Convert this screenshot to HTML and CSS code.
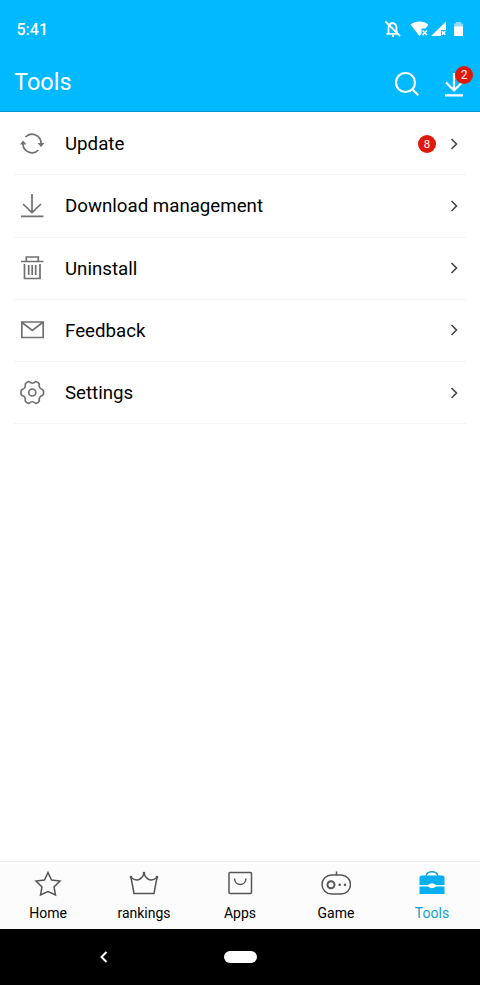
FILE: index.html
```html
<!DOCTYPE html>
<html lang="en">
<head>
<meta charset="utf-8">
<title>Tools</title>
<link rel="stylesheet" href="styles.css">
</head>
<body>
<div class="screen">
  <header class="header">
    <div class="status">
      <span class="time">5:41</span>
      <svg class="status-icons" width="82" height="22" viewBox="384 18 82 22">
        <path class="line" d="M388.500 33.500V28c0-3 1.500-4.500 4-5 2.500.5 4 2 4 5v5.500M386.500 33.800h12M392 36h2M385.500 21.500l14.500 14.500" stroke-width="1.800"/>
        <path class="fill" d="M410.500 24.500c5-4 13-4 18 0l-3 4h-4v5l-2 2.500z"/>
        <path class="line" d="M422.500 30.500l4.500 4.500m0-4.500l-4.500 4.500" stroke-width="1.600"/>
        <path class="fill" d="M431 36L446 21.500V30h-5v6z"/>
        <path class="line" d="M441.800 31.300l3.500 3.500m0-3.500l-3.500 3.500" stroke-width="1.500"/>
        <path class="pale" d="M454 23.500h2V22h5v1.500h2V27h-9z"/>
        <path class="fill" d="M454 26.500h9V36h-9z"/>
      </svg>
    </div>
    <div class="titlebar">
      <h1>Tools</h1>
      <svg class="search" width="26" height="26" viewBox="0 0 26 26"><circle cx="11.500" cy="11.500" r="9.500"/><path d="M18.300 18.300l6 6"/></svg>
      <div class="downloads">
        <svg width="22" height="26" viewBox="0 0 22 26"><path d="M11 2v17M3 11.500l8 8 8-8M2 24.300h18"/></svg>
        <span class="badge badge-top">2</span>
      </div>
    </div>
  </header>
  <main class="list">
    <div class="row">
      <svg class="icon" viewBox="0 0 26 26"><path d="M6.500 6A9 9 0 0 1 22 12.500M19.500 19A9 9 0 0 1 4 12.500"/><path class="head" d="M1 13.500l3-4 3.500 4zM18.500 12h7l-3.500 4z"/></svg>
      <span class="label">Update</span><span class="badge">8</span>
      <svg class="chevron" viewBox="0 0 8 14"><path d="M1.500 2l5 5-5 5"/></svg>
    </div>
    <div class="row">
      <svg class="icon" viewBox="0 0 26 26"><path d="M13 1v18M4 11l9 8.500 9-8.500M2 23.300h22.500"/></svg>
      <span class="label">Download management</span>
      <svg class="chevron" viewBox="0 0 8 14"><path d="M1.500 2l5 5-5 5"/></svg>
    </div>
    <div class="row">
      <svg class="icon" viewBox="0 0 26 26"><path d="M2 6.500h22.500M7.300 6V2h12v4M5.500 9v14.500h15.500V9M9.700 10v10M13.200 10v10M16.700 10v10"/></svg>
      <span class="label">Uninstall</span>
      <svg class="chevron" viewBox="0 0 8 14"><path d="M1.500 2l5 5-5 5"/></svg>
    </div>
    <div class="row">
      <svg class="icon" viewBox="0 0 26 26"><path d="M2.800 5h21.400v15.500h-21.400zM3 5.500l10.300 8 10.300-8"/></svg>
      <span class="label">Feedback</span>
      <svg class="chevron" viewBox="0 0 8 14"><path d="M1.500 2l5 5-5 5"/></svg>
    </div>
    <div class="row">
      <svg class="icon" viewBox="0 0 26 26"><path stroke-linejoin="round" d="M7.500 2.500l2.500-1Q13.300 5 16.600 1.500l2.500 1 1.200 1.500Q19.500 8.500 23.500 9.500l1 1.500v3l-1 1.500Q19.500 16.500 20.300 21l-1.200 1.500-2.500 1Q13.300 20 10 23.500l-2.500-1L6.300 21Q7 16.500 3 15.500L2 14v-3l1-1.500Q7 8.500 6.300 4z"/><circle cx="13.300" cy="12.500" r="3.500"/></svg>
      <span class="label">Settings</span>
      <svg class="chevron" viewBox="0 0 8 14"><path d="M1.500 2l5 5-5 5"/></svg>
    </div>
  </main>
  <nav class="tabs">
    <div class="tab"><svg viewBox="0 0 30 28"><path d="M15 2.500l3.500 7.500 8.500 1-6 6 1.500 8L15 21.500 7.500 25 9 17l-6-6 8.500-1z"/></svg><span>Home</span></div>
    <div class="tab"><svg viewBox="0 0 30 28"><path d="M5 23.500L2 7.500Q7 11.500 11 9 14.500 7 15 3q.5 4 4 6 4 2.500 9-1.500L25 23.500z"/><path class="dots" d="M2 7v.2M15 3v.2M28 7v.2"/></svg><span>rankings</span></div>
    <div class="tab"><svg viewBox="0 0 30 28"><rect x="4" y="2.500" width="22.500" height="21" rx="1"/><path d="M9.500 8.500c.5 8 11 8 11.500 0"/></svg><span>Apps</span></div>
    <div class="tab"><svg viewBox="0 0 30 28"><rect x="1" y="5" width="28.500" height="19" rx="9.500"/><path d="M15.500 5V1.500"/><circle cx="10" cy="14.700" r="3.500" stroke-width="2"/><path class="dots" d="M18.700 14.700v.1M24 14.700v.1"/></svg><span>Game</span></div>
    <div class="tab active"><svg viewBox="0 0 30 28"><path d="M9 6.500c.5-6.500 11.500-6.500 12 0"/><path class="solid" d="M5 5.500h20q2.500 0 2.500 2V15h-8.500q-4-3.500-8 0H2.500V7.500q0-2 2.500-2zM2.500 16.500H11q4 3.500 8 0h8.500V24h-25z"/></svg><span>Tools</span></div>
  </nav>
  <div class="system">
    <svg class="back" viewBox="0 0 8 12"><path d="M6.500 1l-5 5 5 5"/></svg>
    <div class="pill"></div>
    <div></div>
  </div>
</div>
</body>
</html>
```
FILE: styles.css
```css
* { box-sizing: border-box; }
body { margin: 0; background: #fff; font-family: Roboto, "Liberation Sans", sans-serif; color: #000; }
svg { display: block; fill: none; flex: none; }
.screen { width: 480px; height: 985px; display: flex; flex-direction: column; overflow: hidden; }
.header { height: 112px; flex: none; background: #00b9ff; color: #fff; border-bottom: 1px solid #0797d0; }
.status { height: 57px; display: flex; align-items: center; justify-content: space-between; padding: 1px 14px 0 16.500px; }
.time { font-size: 16px; font-weight: 500; }
.status-icons .line { stroke: #fff; }
.status-icons .fill { fill: #fff; }
.status-icons .pale { fill: #8fdcff; }
.titlebar { height: 54px; display: flex; align-items: center; padding: 0 15px 0 14px; }
h1 { flex: 1; margin: -4px 0 0; font-size: 23.500px; font-weight: 400; line-height: 30px; }
.search { stroke: #fff; stroke-width: 2.200; margin-right: 23px; }
.downloads { position: relative; }
.downloads svg { stroke: #fff; stroke-width: 2.200; }
.badge { width: 18px; height: 18px; border-radius: 50%; background: #e01808; color: #fff; font-size: 11.500px; line-height: 18px; text-align: center; }
.badge-top { position: absolute; left: 12px; top: -5px; font-size: 12px; }
.list { flex: 1; padding: 1px 14px 0; }
.row { height: 62.250px; display: flex; align-items: center; border-bottom: 1px solid #f4f4f4; padding-right: 8px; }
.icon { width: 26px; height: 26px; margin-left: 5px; margin-right: 20px; stroke: #707070; stroke-width: 1.700; }
.icon .head { fill: #707070; stroke: none; }
.label { flex: 1; font-size: 18.700px; line-height: 24px; padding-top: 1px; }
.row .badge { margin-right: 14px; }
.chevron { width: 8px; height: 14px; stroke: #444; stroke-width: 1.600; }
.tabs { height: 68px; flex: none; display: flex; background: #fcfcfc; border-top: 1px solid #eee; }
.tab { flex: 1; display: flex; flex-direction: column; align-items: center; padding-top: 8px; font-size: 14px; line-height: 18px; }
.tab svg { width: 30px; height: 28px; margin-bottom: 6px; stroke: #555; stroke-width: 1.500; }
.tab .dots { stroke-width: 2.600; stroke-linecap: round; }
.tab.active { color: #129fce; }
.tab.active svg { stroke: #129fce; }
.tab .solid { fill: #08b0f0; stroke: none; }
.system { height: 56px; flex: none; background: #000; display: grid; grid-template-columns: 208px 64px 208px; align-items: center; justify-items: center; }
.back { width: 8px; height: 12px; stroke: #fff; stroke-width: 2; }
.pill { width: 33px; height: 12px; border-radius: 6px; background: #fff; }
```
